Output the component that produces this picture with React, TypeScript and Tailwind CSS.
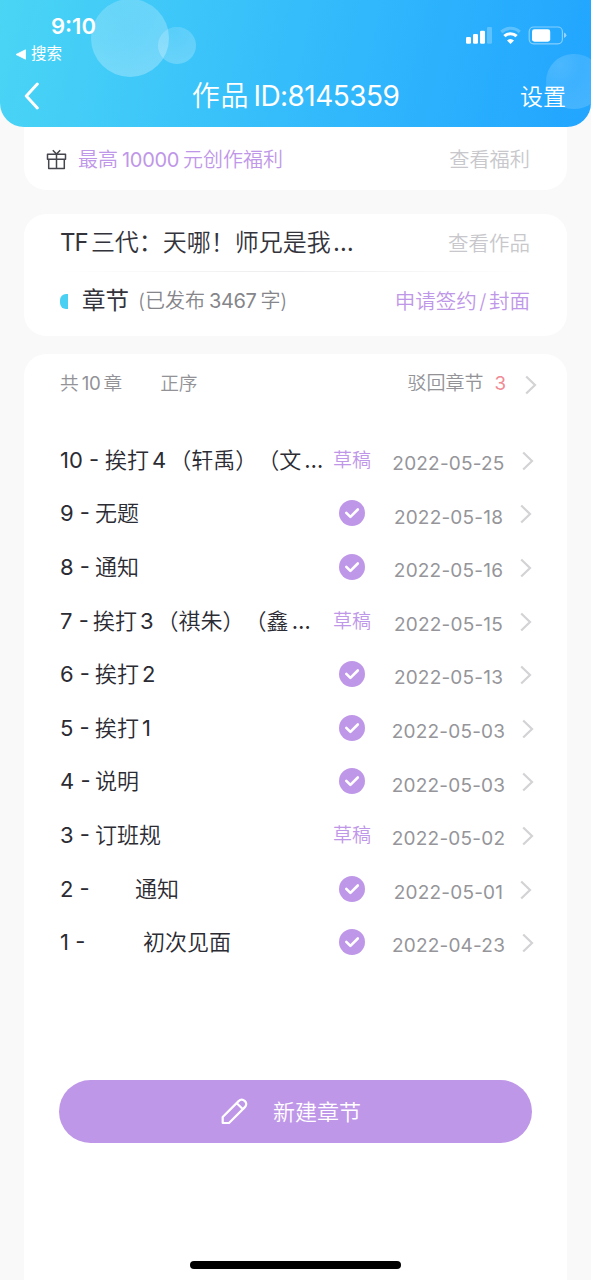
import React from "react";

type Chapter = {
    no: number;
    prefix: string;
    title: React.ReactNode;
    date: string;
    draft?: boolean;
};

const chapters: Chapter[] = [
    {
        no: 10,
        prefix: "w-[45px]",
        title: <>挨打<Num>4</Num>（轩禹）（文<Dots /></>,
        date: "2022-05-25",
        draft: true,
    },
    { no: 9, prefix: "w-[35px]", title: "无题", date: "2022-05-18" },
    { no: 8, prefix: "w-[35px]", title: "通知", date: "2022-05-16" },
    {
        no: 7,
        prefix: "w-[33px]",
        title: <>挨打<Num>3</Num>（祺朱）（鑫<Dots /></>,
        date: "2022-05-15",
        draft: true,
    },
    { no: 6, prefix: "w-[35px]", title: <>挨打<Num>2</Num></>, date: "2022-05-13" },
    { no: 5, prefix: "w-[35px]", title: <>挨打<Num>1</Num></>, date: "2022-05-03" },
    { no: 4, prefix: "w-[35px]", title: "说明", date: "2022-05-03" },
    { no: 3, prefix: "w-[35px]", title: "订班规", date: "2022-05-02", draft: true },
    { no: 2, prefix: "w-[75px]", title: "通知", date: "2022-05-01" },
    { no: 1, prefix: "w-[83px]", title: "初次见面", date: "2022-04-23" },
];

function Num({ children }: { children: React.ReactNode }) {
    return <span className="mx-[3px] font-normal">{children}</span>;
}

function Dots() {
    return <span className="ml-[3px] font-normal">…</span>;
}

const Chevron = () => (
    <svg className="h-[20px] w-[12px] shrink-0" viewBox="0 0 12 20" fill="none" stroke="#d3d3d6" strokeWidth="2.2">
        <path d="M1.2 1.5 L10 10 L1.2 18.5" />
    </svg>
);

const CheckBadge = () => (
    <svg className="h-[26px] w-[26px]" viewBox="0 0 26 26" fill="none">
        <circle cx="13" cy="13" r="13" fill="#bf97e8" />
        <path d="M7.3 12.8 L11.4 16.9 L18.8 9.5" stroke="#fff" strokeWidth="2.6" strokeLinecap="round" strokeLinejoin="round" />
    </svg>
);

const StatusIcons = () => (
    <svg className="h-[20px] w-[104px]" viewBox="0 0 104 20" fill="#fff">
        {/* signal */}
        <rect x="2" y="12" width="5" height="6.7" rx="1.3" />
        <rect x="9" y="9" width="5" height="9.7" rx="1.3" />
        <rect x="16" y="5.7" width="5" height="13" rx="1.3" />
        <rect x="23" y="2" width="5" height="16.7" rx="1.3" opacity=".25" />
        {/* wifi */}
        <path d="M37.3 7 A13.2 13.2 0 0 1 55.7 7" fill="none" stroke="#fff" strokeWidth="3.2" opacity=".25" />
        <path d="M40.4 11.2 A8.8 8.8 0 0 1 52.6 11.2" fill="none" stroke="#fff" strokeWidth="3.2" />
        <path d="M43 15.6 A5.2 5.2 0 0 1 50 15.6 L46.5 19 Z" />
        {/* battery */}
        <rect x="65.2" y="2" width="33.2" height="16.8" rx="4.5" fill="none" stroke="#fff" strokeWidth="1.2" opacity=".45" />
        <rect x="68" y="4.3" width="18.2" height="12.4" rx="2.4" />
        <path d="M100 7.5 Q102.4 8.6 102.4 10.3 Q102.4 12 100 13.1 Z" opacity=".5" />
    </svg>
);

const Header = () => (
    <header className="relative h-[127px] overflow-hidden rounded-b-[24px] bg-[linear-gradient(102deg,#4ad5f5_0%,#35bdfb_48%,#21a5ff_100%)] text-white">
        {/* Bubbles */}
        <div className="absolute left-[91px] top-[-1px] h-[78px] w-[78px] rounded-full bg-[radial-gradient(circle_at_35%_12%,rgba(255,255,255,.2),rgba(255,255,255,.22)_40%,rgba(255,255,255,.3))]" />
        <div className="absolute left-[158px] top-[27px] h-[37px] w-[38px] rounded-full bg-[radial-gradient(circle_at_40%_10%,rgba(255,255,255,.14),rgba(255,255,255,.22)_75%)]" />
        <div className="absolute left-[546px] top-[54px] h-[55px] w-[56px] rounded-full bg-[radial-gradient(circle_at_25%_20%,rgba(255,255,255,.18),rgba(255,255,255,.12)_35%,rgba(255,255,255,.18))]" />

        <div className="relative flex h-[70px] justify-between pl-[15px] pr-[23px]">
            <div>
                <div className="pl-[36px] pt-[14px] text-[22px] font-semibold leading-[24px]">9:10</div>
                <div className="mt-[6px] flex items-center text-[15.5px] leading-[20px]">
                    <svg className="mr-[5px] h-[11px] w-[11px]" viewBox="0 0 11 11" fill="#fff">
                        <path d="M1 5.5 L10.5 .8 V10.2 Z" stroke="#fff" strokeWidth=".8" strokeLinejoin="round" />
                    </svg>
                    搜索
                </div>
            </div>
            <div className="pt-[25px]">
                <StatusIcons />
            </div>
        </div>

        <div className="relative flex h-[52px] items-center pl-[24px] pr-[25px]">
            <svg className="h-[28px] w-[15px]" viewBox="0 0 15 28" fill="none" stroke="#fff" strokeWidth="3" strokeLinecap="round" strokeLinejoin="round">
                <path d="M13.3 2 L2.3 14 L13.3 26" />
            </svg>
            <h1 className="flex-1 whitespace-nowrap pl-[32px] text-center text-[28px] font-[350] leading-[52px]">
                <span className="tracking-[0.8px]">作品</span>
                <span className="ml-[4px] font-normal tracking-[-0.55px]">ID:8145359</span>
            </h1>
            <span className="pt-[2px] text-[23px] font-[350]">设置</span>
        </div>
    </header>
);

const App: React.FC = () => {
    return (
        <div className="flex h-[1280px] w-[591px] flex-col overflow-hidden bg-[#f9f9f9] font-['Inter','Noto_Sans_CJK_SC',sans-serif] [text-spacing-trim:space-all]">
            <Header />

            {/* Bonus */}
            <section className="mx-[24px] flex h-[63px] items-center rounded-b-[22px] bg-white pl-[22px] pr-[37px] pt-[2px] text-[20px] font-[350]">
                <svg className="mr-[11px] h-[21px] w-[21px]" viewBox="0 0 21 21" fill="none" stroke="#45454d" strokeWidth="1.5" strokeLinejoin="round">
                    <path d="M1.5 5.3 H19.5 V10.2 H1.5 Z M2.7 10.2 V19.6 H18.3 V10.2 M10.5 5.3 V19.6 M6.8 1.2 L10.5 5 L14.2 1.2" />
                </svg>
                <span className="whitespace-nowrap text-[#bf97e8]">
                    最高<span className="mx-[4px] font-normal tracking-[-0.3px]">10000</span>元创作福利
                </span>
                <span className="ml-auto pt-[2px] text-[20.2px] text-[#c8c8cc]">查看福利</span>
            </section>

            {/* Work info */}
            <section className="mx-[24px] mt-[24px] h-[122px] rounded-[22px] bg-white pl-[36px] pr-[37px]">
                <div className="flex h-[57px] items-center justify-between whitespace-nowrap pt-[1px]">
                    <span className="text-[24px] font-[350] text-[#33333b]">
                        <span className="mr-[3px] font-normal tracking-[-0.9px]">TF</span>三代：天哪！师兄是我
                        <span className="ml-[2px] font-normal">…</span>
                    </span>
                    <span className="pt-[2px] text-[20.5px] font-[350] text-[#c8c8cc]">查看作品</span>
                </div>
                <div className="h-px bg-[linear-gradient(90deg,transparent,#ececee_50%,transparent)]" />
                <div className="flex h-[58px] items-center whitespace-nowrap">
                    <span className="h-[15px] w-[8px] rounded-l-[6px] bg-[#4ad0f2]" />
                    <span className="ml-[14px] text-[23.5px] text-[#33333b]">章节</span>
                    <span className="ml-[9px] text-[20px] font-[350] text-[#85858a]">
                        (已发布<span className="mx-[4px] font-normal tracking-[-0.4px]">3467</span>字)
                    </span>
                    <span className="ml-auto pt-[2px] text-[20.5px] font-[350] text-[#bf97e8]">
                        申请签约<span className="mx-[2.5px]">/</span>封面
                    </span>
                </div>
            </section>

            {/* Chapters */}
            <section className="mx-[24px] mt-[18px] flex-1 rounded-t-[22px] bg-white px-[36px]">
                <div className="flex h-[58px] items-center whitespace-nowrap pt-[2px] text-[18.7px] font-[350] text-[#929297]">
                    <span>
                        共<span className="mx-[3px] font-normal tracking-[-0.3px]">10</span>章
                    </span>
                    <span className="ml-[38px]">正序</span>
                    <span className="ml-auto text-[19px]">驳回章节</span>
                    <span className="ml-[11px] font-normal text-[#f08a94]">3</span>
                    <span className="-mr-[6px] ml-[19px] pt-[2px]">
                        <Chevron />
                    </span>
                </div>

                <ul className="pt-[21px]">
                    {chapters.map((c) => (
                        <li key={c.no} className="flex h-[53.6px] items-center whitespace-nowrap">
                            <div className="flex w-[273px] shrink-0 pt-[1px] text-[22px] font-[350] text-[#2b2b33]">
                                <span className={`${c.prefix} shrink-0 font-normal`}>{c.no} -</span>
                                <span>{c.title}</span>
                            </div>
                            <div className="flex w-[38px] shrink-0 justify-center">
                                {c.draft ? (
                                    <span className="pt-[3px] text-[19px] font-[350] text-[#bf97e8]">草稿</span>
                                ) : (
                                    <CheckBadge />
                                )}
                            </div>
                            <div className="ml-[18px] flex w-[148px] shrink-0 items-center justify-center gap-[17px]">
                                <span className="pt-[9px] text-[19px] tracking-[0.2px] text-[#95959a]">{c.date}</span>
                                <span className="pt-[2px]">
                                    <Chevron />
                                </span>
                            </div>
                        </li>
                    ))}
                </ul>

                <button className="-ml-[1px] mt-[111px] flex h-[63px] w-[473px] items-center rounded-full bg-[#bf97e8] pl-[162px] text-[22px] font-[350] text-white">
                    <svg className="mr-[25px] h-[27px] w-[27px]" viewBox="0 0 27 27" fill="none" stroke="#fff" strokeWidth="2.2" strokeLinejoin="round">
                        <path d="M1.7 25 V19 L17.6 3.1 C19.4 1.3 22 1.3 23.9 3.1 C25.7 4.9 25.7 7.3 23.9 9.1 L8 25 Z M15.5 5 L22 11.3" />
                    </svg>
                    <span className="pt-[2px]">新建章节</span>
                </button>

                {/* Home indicator */}
                <div className="mx-auto mt-[118px] h-[8px] w-[211px] rounded-full bg-black" />
            </section>
        </div>
    );
};

export default App;
